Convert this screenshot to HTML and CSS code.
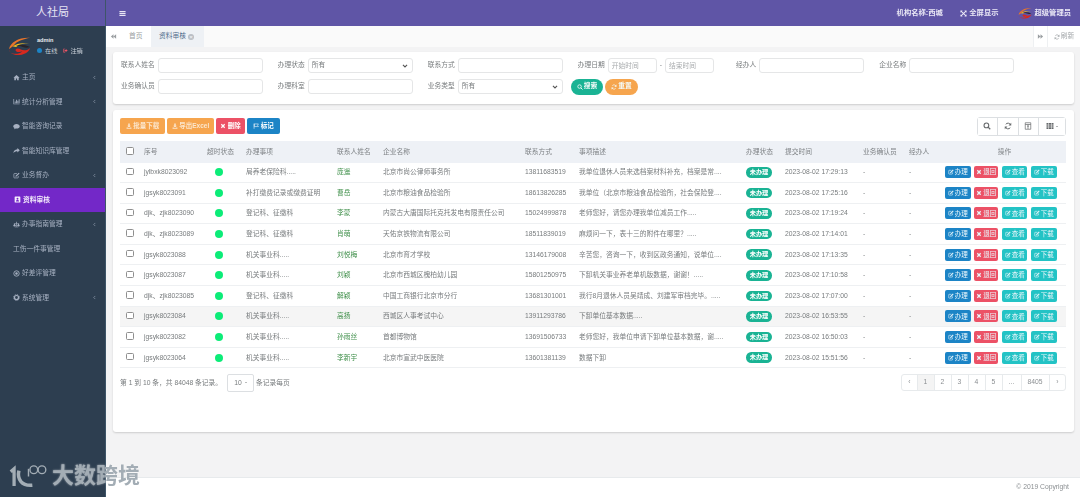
FILE: index.html
```html
<!DOCTYPE html>
<html lang="zh-CN">
<head>
<meta charset="utf-8">
<title>人社局</title>
<link rel="stylesheet" href="styles.css">
</head>
<body>
<svg class="defs" width="0" height="0" aria-hidden="true">
  <symbol id="i-home" viewBox="0 0 16 16"><path d="M8 2 1 8.500h2V14h3.700v-4h2.600v4H13V8.500h2z"/></symbol>
  <symbol id="i-chart" viewBox="0 0 16 16"><path d="M1 2h1.500v11H15v1.500H1zM4 8h2v4H4zM7 4h2v8H7zM10 6h2v6h-2zM13 3h2v9h-2z"/></symbol>
  <symbol id="i-comment" viewBox="0 0 16 16"><path d="M8 2c4 0 7.500 2.300 7.500 5.300S12 12.600 8 12.600c-.6 0-1.200 0-1.800-.1C5 13.600 3.500 14.200 2 14.300c.8-.8 1.400-1.800 1.500-2.900C1.700 10.500.5 9 .5 7.300.5 4.300 4 2 8 2z"/></symbol>
  <symbol id="i-share" viewBox="0 0 16 16"><path d="M10 2.500 15.500 7.500 10 12.500V9.800C6 9.800 3 10.800 1 14c0-5 3-8.500 9-9z"/></symbol>
  <symbol id="i-edit" viewBox="0 0 16 16"><path d="M12 9v3.500a1 1 0 0 1-1 1H3a1 1 0 0 1-1-1v-8a1 1 0 0 1 1-1h6" fill="none" stroke="currentColor" stroke-width="1.600"/><path d="M13 1.500 15 3.500 8 10.500 5.500 11 6 8.500z"/></symbol>
  <symbol id="i-book" viewBox="0 0 16 16"><path fill-rule="evenodd" d="M3 1h10a1.500 1.500 0 0 1 1.500 1.500v11A1.500 1.500 0 0 1 13 15H3a1.500 1.500 0 0 1-1.500-1.500v-11A1.500 1.500 0 0 1 3 1zm5 3a2.200 2.200 0 1 0 0 4.400A2.200 2.200 0 0 0 8 4zM4.500 12.500h7C11.500 10.500 10 9.300 8 9.300s-3.500 1.200-3.500 3.200z"/></symbol>
  <symbol id="i-scale" viewBox="0 0 16 16"><path d="M7.200 1.500h1.600v11H7.200zM4 13h8v1.500H4zM2 5h12v1.200H2z"/><path d="M.5 10a3 2.400 0 0 0 6 0L3.500 5.500zM9.500 10a3 2.400 0 0 0 6 0l-3-4.500z"/></symbol>
  <symbol id="i-dot" viewBox="0 0 16 16"><circle cx="8" cy="8" r="6.200" fill="none" stroke="currentColor" stroke-width="2"/><circle cx="8" cy="8" r="2.800"/></symbol>
  <symbol id="i-gear" viewBox="0 0 16 16"><circle cx="8" cy="8" r="4.600" fill="none" stroke="currentColor" stroke-width="2.800"/><circle cx="8" cy="8" r="6.700" fill="none" stroke="currentColor" stroke-width="2" stroke-dasharray="2.600 2.650"/></symbol>
  <symbol id="i-left" viewBox="0 0 16 16"><path d="M10.500 3 5.500 8l5 5" fill="none" stroke="currentColor" stroke-width="1.800"/></symbol>
  <symbol id="i-right" viewBox="0 0 16 16"><path d="M5.500 3l5 5-5 5" fill="none" stroke="currentColor" stroke-width="1.800"/></symbol>
  <symbol id="i-down" viewBox="0 0 16 16"><path d="M2.500 5 8 10.500 13.500 5" fill="none" stroke="currentColor" stroke-width="3"/></symbol>
  <symbol id="i-bars" viewBox="0 0 16 16"><path d="M1 2.500h14v2.600H1zM1 6.700h14v2.600H1zM1 10.900h14v2.600H1z"/></symbol>
  <symbol id="i-search" viewBox="0 0 16 16"><circle cx="6.800" cy="6.800" r="4.700" fill="none" stroke="currentColor" stroke-width="2.200"/><path d="M10.200 10.200 14.500 14.500" stroke="currentColor" stroke-width="2.600"/></symbol>
  <symbol id="i-refresh" viewBox="0 0 16 16"><path d="M13.300 6A5.600 5.600 0 0 0 3.500 4.600M2.700 10a5.600 5.600 0 0 0 9.800 1.400" fill="none" stroke="currentColor" stroke-width="2"/><path d="M14.500 1.500V7H9zM1.500 14.500V9H7z"/></symbol>
  <symbol id="i-download" viewBox="0 0 16 16"><path d="M6 1.500h4V7h3L8 12 3 7h3zM1.500 12h3l1.500 1.500h4L11.500 12h3v3h-13z"/></symbol>
  <symbol id="i-times" viewBox="0 0 16 16"><path d="M3.500 3.500l9 9M12.500 3.500l-9 9" stroke="currentColor" stroke-width="3.400" fill="none"/></symbol>
  <symbol id="i-flag" viewBox="0 0 16 16"><path d="M2 1.500h1.500V15H2z"/><path d="M3.500 2.500h11l-2.500 3.500 2.500 3.500h-11z" fill="none" stroke="currentColor" stroke-width="1.500"/></symbol>
  <symbol id="i-expand" viewBox="0 0 16 16"><path d="M1 1h5L4.300 2.700 8 6.400l3.700-3.700L10 1h5v5l-1.700-1.700L9.600 8l3.700 3.700L15 10v5h-5l1.700-1.700L8 9.600l-3.700 3.700L6 15H1v-5l1.700 1.700L6.400 8 2.700 4.300 1 6z"/></symbol>
  <symbol id="i-back" viewBox="0 0 16 16"><path d="M8 3v10L2 8zM14 3v10L8 8z"/></symbol>
  <symbol id="i-forward" viewBox="0 0 16 16"><path d="M2 3v10l6-5zM8 3v10l6-5z"/></symbol>
  <symbol id="i-toggle" viewBox="0 0 16 16"><path d="M2.500 1.500h11v13h-11zM2.500 5h11M8 5v9" fill="none" stroke="currentColor" stroke-width="1.400"/><path d="M6 7.500h4L8 10z"/></symbol>
  <symbol id="i-grid" viewBox="0 0 16 16"><path d="M1 2h4v3.400H1zM6 2h4v3.400H6zM11 2h4v3.400h-4zM1 6.300h4v3.400H1zM6 6.300h4v3.400H6zM11 6.300h4v3.400h-4zM1 10.600h4V14H1zM6 10.600h4V14H6zM11 10.600h4V14h-4z"/></symbol>
  <symbol id="i-logout" viewBox="0 0 16 16"><path d="M1 2h6v2.200H3v7.600h4V14H1z"/><path d="M9 3.500 15 8l-6 4.500V10H5V6h4z"/></symbol>
  <symbol id="logo" viewBox="0 0 24 20">
    <path d="M1 13C3 6 11 1 23 1.500 16 3 9 5 6 9.500 4.500 11 3 12 1 13z" fill="#e8742a"/>
    <path d="M5 10.500C9 7 15 6.500 22 7.500c-5 0-10 .5-13.500 3.500z" fill="#f0c020"/>
    <path d="M1 13.500c.5 3.500 4 6 9 6 6 0 12-3 13-7.500-1.500 1.500-3.500 2.500-6 2.500-3 0-4-2-7-2-1.500 0-2.500 1-2 2.500 1 2 5 1.500 7 .5-3 3-9 3.500-12 1.500C2.300 16 1.300 15 1 13.500z" fill="#d8281e"/>
    <path d="M8 9.500c5-1.500 10-.5 15 1.500-3 1-5 1-7.500 0-2.500-1-5-2-7.500-1.500z" fill="#2a2226"/>
  </symbol>
</svg>

<div class="app">
  <aside class="side">
    <div class="brand">人社局</div>
    <div class="profile">
      <svg class="avatar"><use href="#logo"/></svg>
      <div class="who">
        <div class="who-name">admin</div>
        <div class="who-state">
          <span class="online-dot"></span><span>在线</span>
          <svg class="ico logout"><use href="#i-logout"/></svg><span>注销</span>
        </div>
      </div>
    </div>
    <nav class="nav">
      <a class="nav-item"><svg class="ico"><use href="#i-home"/></svg><span>主页</span><svg class="ico chev"><use href="#i-left"/></svg></a>
      <a class="nav-item"><svg class="ico"><use href="#i-chart"/></svg><span>统计分析管理</span><svg class="ico chev"><use href="#i-left"/></svg></a>
      <a class="nav-item"><svg class="ico"><use href="#i-comment"/></svg><span>智能咨询记录</span></a>
      <a class="nav-item"><svg class="ico"><use href="#i-share"/></svg><span>智能知识库管理</span></a>
      <a class="nav-item"><svg class="ico"><use href="#i-edit"/></svg><span>业务督办</span><svg class="ico chev"><use href="#i-left"/></svg></a>
      <a class="nav-item active"><svg class="ico"><use href="#i-book"/></svg><span>资料审核</span></a>
      <a class="nav-item"><svg class="ico"><use href="#i-scale"/></svg><span>办事指南管理</span><svg class="ico chev"><use href="#i-left"/></svg></a>
      <a class="nav-item"><span>工伤一件事管理</span></a>
      <a class="nav-item"><svg class="ico"><use href="#i-dot"/></svg><span>好差评管理</span></a>
      <a class="nav-item"><svg class="ico"><use href="#i-gear"/></svg><span>系统管理</span><svg class="ico chev"><use href="#i-left"/></svg></a>
    </nav>
  </aside>

  <main class="main">
    <header class="top">
      <svg class="ico top-bars"><use href="#i-bars"/></svg>
      <div class="top-right">
        <span class="top-org">机构名称:西城</span>
        <span class="top-full"><svg class="ico"><use href="#i-expand"/></svg>全屏显示</span>
        <span class="top-user"><svg class="top-logo"><use href="#logo"/></svg>超级管理员</span>
      </div>
    </header>

    <div class="tabs">
      <button class="tab-arrow"><svg class="ico"><use href="#i-back"/></svg></button>
      <span class="tab">首页</span>
      <span class="tab tab-on">资料审核<i class="tab-close">×</i></span>
      <span class="tabs-fill"></span>
      <button class="tab-arrow tab-arrow-r"><svg class="ico"><use href="#i-forward"/></svg></button>
      <button class="tab-refresh"><svg class="ico"><use href="#i-refresh"/></svg>刷新</button>
    </div>

    <div class="content">
      <section class="card filter">
        <div class="frow">
          <label class="field"><span>联系人姓名</span><input class="inp"></label>
          <label class="field"><span>办理状态</span><span class="sel"><select class="inp"><option>所有</option></select><svg class="ico sel-arrow"><use href="#i-down"/></svg></span></label>
          <label class="field"><span>联系方式</span><input class="inp"></label>
          <div class="field"><span>办理日期</span><input class="inp inp-date" placeholder="开始时间"><span class="dash">-</span><input class="inp inp-date" placeholder="结束时间"></div>
          <label class="field field-wide"><span>经办人</span><input class="inp"></label>
          <label class="field"><span>企业名称</span><input class="inp"></label>
        </div>
        <div class="frow">
          <label class="field"><span>业务确认员</span><input class="inp"></label>
          <label class="field"><span>办理科室</span><input class="inp"></label>
          <label class="field"><span>业务类型</span><span class="sel"><select class="inp"><option>所有</option></select><svg class="ico sel-arrow"><use href="#i-down"/></svg></span></label>
          <button class="pill pill-green"><svg class="ico"><use href="#i-search"/></svg>搜索</button>
          <button class="pill pill-orange"><svg class="ico"><use href="#i-refresh"/></svg>重置</button>
        </div>
      </section>

      <section class="card list">
        <div class="toolbar">
          <button class="tbtn orange w45"><svg class="ico"><use href="#i-download"/></svg>批量下载</button>
          <button class="tbtn orange w47"><svg class="ico"><use href="#i-download"/></svg>导出Excel</button>
          <button class="tbtn red w29"><svg class="ico"><use href="#i-times"/></svg>删除</button>
          <button class="tbtn blue w33"><svg class="ico"><use href="#i-flag"/></svg>标记</button>
          <div class="tools">
            <button class="tool"><svg class="ico"><use href="#i-search"/></svg></button>
            <button class="tool"><svg class="ico"><use href="#i-refresh"/></svg></button>
            <button class="tool"><svg class="ico"><use href="#i-toggle"/></svg></button>
            <button class="tool tool-last"><svg class="ico"><use href="#i-grid"/></svg><i class="caret"></i></button>
          </div>
        </div>

        <table class="grid">
          <colgroup>
            <col class="c-cb"><col class="c-no"><col class="c-late"><col class="c-item"><col class="c-name"><col class="c-co"><col class="c-tel"><col class="c-desc"><col class="c-st"><col class="c-time"><col class="c-conf"><col class="c-op"><col class="c-act">
          </colgroup>
          <thead>
            <tr><th class="cb"><input type="checkbox"></th><th>序号</th><th>超时状态</th><th>办理事项</th><th>联系人姓名</th><th>企业名称</th><th>联系方式</th><th>事项描述</th><th>办理状态</th><th>提交时间</th><th>业务确认员</th><th>经办人</th><th class="center">操作</th></tr>
          </thead>
          <tbody id="rows">
            <tr><td class="cb"><input type="checkbox"></td><td>jylbxk8023092</td><td><i class="dot"></i></td><td>局养老保险科.....</td><td class="nm">庞遥</td><td>北京市尚公律师事务所</td><td>13811683519</td><td>我单位退休人员来选档案材料补充，档案是常....</td><td><span class="st">未办理</span></td><td>2023-08-02 17:29:13</td><td>-</td><td>-</td><td class="acts"><span class="act blue"><svg class="ico"><use href="#i-edit"/></svg>办理</span><span class="act red"><svg class="ico"><use href="#i-times"/></svg>退回</span><span class="act teal"><svg class="ico"><use href="#i-edit"/></svg>查看</span><span class="act teal"><svg class="ico"><use href="#i-edit"/></svg>下载</span></td></tr>
            <tr><td class="cb"><input type="checkbox"></td><td>jgsyk8023091</td><td><i class="dot"></i></td><td>补打缴费记录或缴费证明</td><td class="nm">曹岳</td><td>北京市粮油食品检验所</td><td>18613826285</td><td>我单位（北京市粮油食品检验所，社会保险登....</td><td><span class="st">未办理</span></td><td>2023-08-02 17:25:16</td><td>-</td><td>-</td><td class="acts"><span class="act blue"><svg class="ico"><use href="#i-edit"/></svg>办理</span><span class="act red"><svg class="ico"><use href="#i-times"/></svg>退回</span><span class="act teal"><svg class="ico"><use href="#i-edit"/></svg>查看</span><span class="act teal"><svg class="ico"><use href="#i-edit"/></svg>下载</span></td></tr>
            <tr><td class="cb"><input type="checkbox"></td><td>djk、zjk8023090</td><td><i class="dot"></i></td><td>登记科、征缴科</td><td class="nm">李蒙</td><td>内蒙古大唐国际托克托发电有限责任公司</td><td>15024999878</td><td>老师您好，请您办理我单位减员工作.....</td><td><span class="st">未办理</span></td><td>2023-08-02 17:19:24</td><td>-</td><td>-</td><td class="acts"><span class="act blue"><svg class="ico"><use href="#i-edit"/></svg>办理</span><span class="act red"><svg class="ico"><use href="#i-times"/></svg>退回</span><span class="act teal"><svg class="ico"><use href="#i-edit"/></svg>查看</span><span class="act teal"><svg class="ico"><use href="#i-edit"/></svg>下载</span></td></tr>
            <tr><td class="cb"><input type="checkbox"></td><td>djk、zjk8023089</td><td><i class="dot"></i></td><td>登记科、征缴科</td><td class="nm">肖萌</td><td>天佑京铁物流有限公司</td><td>18511839019</td><td>麻烦问一下，表十三的附件在哪里？.....</td><td><span class="st">未办理</span></td><td>2023-08-02 17:14:01</td><td>-</td><td>-</td><td class="acts"><span class="act blue"><svg class="ico"><use href="#i-edit"/></svg>办理</span><span class="act red"><svg class="ico"><use href="#i-times"/></svg>退回</span><span class="act teal"><svg class="ico"><use href="#i-edit"/></svg>查看</span><span class="act teal"><svg class="ico"><use href="#i-edit"/></svg>下载</span></td></tr>
            <tr><td class="cb"><input type="checkbox"></td><td>jgsyk8023088</td><td><i class="dot"></i></td><td>机关事业科.....</td><td class="nm">刘悦梅</td><td>北京市育才学校</td><td>13146179008</td><td>辛苦您，咨询一下，收到区政务通知，说单位....</td><td><span class="st">未办理</span></td><td>2023-08-02 17:13:35</td><td>-</td><td>-</td><td class="acts"><span class="act blue"><svg class="ico"><use href="#i-edit"/></svg>办理</span><span class="act red"><svg class="ico"><use href="#i-times"/></svg>退回</span><span class="act teal"><svg class="ico"><use href="#i-edit"/></svg>查看</span><span class="act teal"><svg class="ico"><use href="#i-edit"/></svg>下载</span></td></tr>
            <tr><td class="cb"><input type="checkbox"></td><td>jgsyk8023087</td><td><i class="dot"></i></td><td>机关事业科.....</td><td class="nm">刘颖</td><td>北京市西城区槐柏幼儿园</td><td>15801250975</td><td>下卸机关事业养老单机版数据，谢谢！.....</td><td><span class="st">未办理</span></td><td>2023-08-02 17:10:58</td><td>-</td><td>-</td><td class="acts"><span class="act blue"><svg class="ico"><use href="#i-edit"/></svg>办理</span><span class="act red"><svg class="ico"><use href="#i-times"/></svg>退回</span><span class="act teal"><svg class="ico"><use href="#i-edit"/></svg>查看</span><span class="act teal"><svg class="ico"><use href="#i-edit"/></svg>下载</span></td></tr>
            <tr><td class="cb"><input type="checkbox"></td><td>djk、zjk8023085</td><td><i class="dot"></i></td><td>登记科、征缴科</td><td class="nm">解颖</td><td>中国工商银行北京市分行</td><td>13681301001</td><td>我行8月退休人员吴靖成、刘建军审档完毕。.....</td><td><span class="st">未办理</span></td><td>2023-08-02 17:07:00</td><td>-</td><td>-</td><td class="acts"><span class="act blue"><svg class="ico"><use href="#i-edit"/></svg>办理</span><span class="act red"><svg class="ico"><use href="#i-times"/></svg>退回</span><span class="act teal"><svg class="ico"><use href="#i-edit"/></svg>查看</span><span class="act teal"><svg class="ico"><use href="#i-edit"/></svg>下载</span></td></tr>
            <tr class="hover"><td class="cb"><input type="checkbox"></td><td>jgsyk8023084</td><td><i class="dot"></i></td><td>机关事业科.....</td><td class="nm">高扬</td><td>西城区人事考试中心</td><td>13911293786</td><td>下卸单位基本数据.....</td><td><span class="st">未办理</span></td><td>2023-08-02 16:53:55</td><td>-</td><td>-</td><td class="acts"><span class="act blue"><svg class="ico"><use href="#i-edit"/></svg>办理</span><span class="act red"><svg class="ico"><use href="#i-times"/></svg>退回</span><span class="act teal"><svg class="ico"><use href="#i-edit"/></svg>查看</span><span class="act teal"><svg class="ico"><use href="#i-edit"/></svg>下载</span></td></tr>
            <tr><td class="cb"><input type="checkbox"></td><td>jgsyk8023082</td><td><i class="dot"></i></td><td>机关事业科.....</td><td class="nm">孙雨丝</td><td>首都博物馆</td><td>13691506733</td><td>老师您好，我单位申请下卸单位基本数据，谢.....</td><td><span class="st">未办理</span></td><td>2023-08-02 16:50:03</td><td>-</td><td>-</td><td class="acts"><span class="act blue"><svg class="ico"><use href="#i-edit"/></svg>办理</span><span class="act red"><svg class="ico"><use href="#i-times"/></svg>退回</span><span class="act teal"><svg class="ico"><use href="#i-edit"/></svg>查看</span><span class="act teal"><svg class="ico"><use href="#i-edit"/></svg>下载</span></td></tr>
            <tr><td class="cb"><input type="checkbox"></td><td>jgsyk8023064</td><td><i class="dot"></i></td><td>机关事业科.....</td><td class="nm">李新宇</td><td>北京市宣武中医医院</td><td>13601381139</td><td>数据下卸</td><td><span class="st">未办理</span></td><td>2023-08-02 15:51:56</td><td>-</td><td>-</td><td class="acts"><span class="act blue"><svg class="ico"><use href="#i-edit"/></svg>办理</span><span class="act red"><svg class="ico"><use href="#i-times"/></svg>退回</span><span class="act teal"><svg class="ico"><use href="#i-edit"/></svg>查看</span><span class="act teal"><svg class="ico"><use href="#i-edit"/></svg>下载</span></td></tr>
          </tbody>
        </table>

        <div class="pager-row">
          <span>第 1 到 10 条，共 84048 条记录。</span>
          <span class="size">10<i class="caret"></i></span>
          <span>条记录每页</span>
          <div class="pager">
            <a class="pg pg-arrow">‹</a><a class="pg pg-on">1</a><a class="pg">2</a><a class="pg">3</a><a class="pg">4</a><a class="pg">5</a><a class="pg pg-more">...</a><a class="pg pg-last">8405</a><a class="pg pg-arrow">›</a>
          </div>
        </div>
      </section>
    </div>

    <footer class="foot">© 2019 Copyright</footer>
  </main>

  <div class="mark">
    <svg class="mark-logo" viewBox="0 0 40 26" fill="none" stroke="currentColor">
      <path d="M1.500 8 5 5V23" stroke-width="3.400"/>
      <path d="M10 7C8 16 13 23 24 22" stroke-width="3.600"/>
      <path d="M20 5V13" stroke-width="1.500"/>
      <circle cx="25.500" cy="6" r="4" stroke-width="1.400"/>
      <circle cx="34" cy="6" r="4" stroke-width="1.400"/>
    </svg>
    <span>大数跨境</span>
  </div>
</div>
</body>
</html>
```
FILE: styles.css
```css
* { box-sizing: border-box; }
html, body { margin: 0; height: 100%; overflow: hidden; }
body {
  font: 6.75px/1.2 "Liberation Sans", "Noto Sans CJK SC", sans-serif;
  color: #777b7d;
  background: #f3f3f4;
}
button { font: inherit; border: 0; padding: 0; cursor: pointer; }
.defs { position: absolute; }
.ico { width: 7px; height: 7px; fill: currentColor; flex: none; }

.app { display: flex; height: 497px; position: relative; filter: blur(.3px); }

/* sidebar */
.side { width: 106px; flex: none; background: #2d3e50; color: #a7b1c2; border-right: 1px solid #3e5568; }
.brand { height: 26px; background: #5f55a6; color: #e6e4f2; font-size: 11px; display: flex; align-items: center; justify-content: center; }
.profile { height: 39px; display: flex; padding: 10px 0 0 8px; gap: 6px; }
.avatar { width: 23px; height: 20px; }
.who { padding-top: 1px; }
.who-name { color: #e8ebef; font-weight: 700; font-size: 5.600px; line-height: 7px; }
.who-state { display: flex; align-items: center; gap: 2px; margin-top: 3px; color: #c9d0d8; font-size: 6.200px; }
.online-dot { width: 5px; height: 5px; border-radius: 50%; background: #1c84c6; margin-right: 1px; }
.logout { width: 5px; height: 5px; color: #ed5565; margin-left: 4px; }
.nav { display: flex; flex-direction: column; }
.nav-item { height: 24.500px; display: flex; align-items: center; gap: 2px; padding: 0 8px 0 13px; position: relative; }
.nav-item span { flex: 1; }
.chev { width: 5px; height: 5px; }
.active { background: #7328c8; color: #f3ecfb; padding-left: 14px; font-weight: 700; }
.active .ico { width: 7px; height: 7px; }

/* main */
.main { flex: 1; min-width: 0; display: flex; flex-direction: column; }
.top { height: 26px; background: #5f55a6; color: #fff; display: flex; align-items: center; padding: 0 9px 0 13px; justify-content: space-between; }
.top-bars { width: 7px; height: 7px; color: #e8e6f4; }
.top-right { display: flex; align-items: center; font-weight: 700; color: #ebe9f6; font-size: 7.300px; }
.top-org { margin-right: 17px; }
.top-full { display: flex; align-items: center; gap: 2.500px; margin-right: 19px; }
.top-user { display: flex; align-items: center; gap: 3px; }
.top-logo { width: 14px; height: 12px; }

.tabs { height: 21px; display: flex; background: #fafafa; color: #9a9ea1; }
.tab-arrow { width: 15px; background: #fff; color: #9a9ea1; display: flex; align-items: center; justify-content: center; }
.tab-arrow-r { border-left: 1px solid #eef0f2; border-right: 1px solid #eef0f2; }
.tab { padding: 0 8px; display: flex; align-items: center; background: #fff; width: 30px; white-space: nowrap; }
.tab-on { width: 53px; background: #eef1f5; color: #4e6b8c; padding-left: 8px; gap: 2px; }
.tab-close { width: 6px; height: 6px; border-radius: 50%; background: #b9bec4; color: #eef1f5; font: 700 6px/6px "Liberation Sans", sans-serif; text-align: center; }
.tabs-fill { flex: 1; }
.tab-refresh { width: 32px; background: #fff; color: #a3a7aa; display: flex; align-items: center; justify-content: center; gap: 1px; }
.tab-refresh .ico { width: 6px; height: 6px; }

.content { flex: 1; min-height: 0; padding: 5px 6px 0 7px; display: flex; flex-direction: column; gap: 6px; }
.card { background: #fff; border-radius: 3px; box-shadow: 0 1px 2px rgba(0, 0, 0, .16); }

/* filter */
.filter { height: 52px; padding: 6px 8px 0; display: flex; flex-direction: column; gap: 6px; }
.frow { display: flex; align-items: center; height: 15px; gap: 15px; }
.field { display: flex; align-items: center; gap: 3px; white-space: nowrap; }
.field-wide { margin-left: 7px; }
.inp { width: 105px; height: 15px; border: 1px solid #e5e6e7; border-radius: 3px; background: #fff; font: inherit; color: #777b7d; padding: 0 3px; outline: 0; appearance: none; display: block; }
.inp::placeholder { color: #a8abad; }
.inp-date { width: 49px; }
.dash { width: 2.250px; text-align: center; }
.sel { position: relative; display: block; }
.sel-arrow { position: absolute; right: 5px; top: 5px; width: 6px; height: 6px; color: #555; }
.pill { height: 16px; width: 32.500px; border-radius: 8px; color: #f4fbf9; font-weight: 700; display: flex; align-items: center; justify-content: center; gap: 1px; }
.pill .ico { width: 6px; height: 6px; }
.pill-green { background: #1ab394; margin-left: -7px; }
.pill-orange { background: #f6a54e; margin-left: -13px; }

/* list */
.list { height: 322px; padding: 7px 8px 0 7px; }
.toolbar { height: 18.500px; display: flex; align-items: center; gap: 2px; margin-bottom: 5.500px; }
.tbtn { height: 16px; border-radius: 2px; color: #fff; font-weight: 700; display: flex; align-items: center; justify-content: center; gap: 1.500px; font-size: 6.500px; }
.tbtn .ico { width: 6px; height: 6px; }
.orange { background: #f6a54e; color: #fbe6cd; }
.red { background: #ec5166; }
.blue { background: #1c84c6; }
.teal { background: #23c3c5; }
.w45 { width: 45px; }
.w47 { width: 47px; }
.w29 { width: 29px; }
.w33 { width: 33px; }
.tools { margin-left: auto; display: flex; height: 18.500px; border: 1px solid #dcdfe2; border-radius: 3px; }
.tool { width: 20.500px; background: #fff; color: #676a6c; border-right: 1px solid #dcdfe2; display: flex; align-items: center; justify-content: center; gap: 2px; }
.tool-last { width: 26px; border-right: 0; }
.tool .ico { width: 8px; height: 8px; }
.caret { width: 0; height: 0; border: 1.500px solid transparent; border-top-color: currentColor; border-bottom: 0; display: inline-block; }

.grid { width: 946px; table-layout: fixed; border-collapse: separate; border-spacing: 0; }
.c-cb { width: 20px; }
.c-no { width: 63px; }
.c-late { width: 39px; }
.c-item { width: 91px; }
.c-name { width: 46px; }
.c-co { width: 142px; }
.c-tel { width: 54px; }
.c-desc { width: 167px; }
.c-st { width: 39px; }
.c-time { width: 78px; }
.c-conf { width: 46px; }
.c-op { width: 34px; }
.c-act { width: 127px; }
.grid th { height: 21.500px; background: #eef1f6; font-weight: 400; text-align: left; padding: 0 0 0 4px; white-space: nowrap; color: #7e8285; }
.grid td { height: 20.600px; padding: 0 0 0 4px; border-bottom: 1px solid #eef0f2; white-space: nowrap; overflow: hidden; }
.grid .center { text-align: center; }
.grid .cb { padding-left: 6px; }
.cb input { appearance: none; display: block; width: 7.500px; height: 7.500px; margin: 0 0 2px; border: 1px solid #8f8f8f; border-radius: 1.500px; background: #fff; }
.hover td { background: #f5f5f5; }
.nm { color: #3f8f4a; }
.dot { display: block; width: 8px; height: 8px; margin-left: 8px; border-radius: 50%; background: #0cec78; }
.st { display: block; width: 26px; height: 10.500px; line-height: 10.500px; border-radius: 5.250px; background: #1ab394; color: #fff; font-weight: 700; text-align: center; font-size: 6.200px; }
.acts { font-size: 0; }
.grid .acts { padding-left: 6px; }
.act { display: inline-flex; align-items: center; justify-content: center; gap: 1px; width: 25.500px; height: 12px; border-radius: 2px; color: #e9f6fb; font-size: 6.500px; margin-right: 3.700px; vertical-align: middle; }
.act:last-child { margin-right: 0; }
.act .ico { width: 6px; height: 6px; }
.act.red { width: 24px; }

.pager-row { display: flex; align-items: center; margin-top: 5.500px; height: 18px; gap: 5px; }
.size { width: 27px; height: 18px; border: 1px solid #dcdfe2; border-radius: 2px; display: flex; align-items: center; justify-content: center; gap: 3px; margin-right: -3px; }
.pager { margin-left: auto; display: flex; height: 17.500px; border: 1px solid #e7eaec; border-radius: 3px; margin-top: -1px; }
.pg { width: 17px; display: flex; align-items: center; justify-content: center; border-right: 1px solid #e7eaec; color: #8b8f92; }
.pg:last-child { border-right: 0; }
.pg-arrow { width: 15.500px; }
.pg-on { background: #f4f4f4; }
.pg-more { width: 19px; }
.pg-last { width: 28px; }

.foot { height: 20px; background: #fff; border-top: 1px solid #e7eaec; text-align: right; padding: 5px 11px 0 0; color: #8b8f92; }

/* watermark */
.mark { position: absolute; left: 9px; top: 463px; display: flex; align-items: center; gap: 4px; color: #a3adb5; font-size: 22px; line-height: 26px; font-weight: 700; text-shadow: 0 0 2px rgba(255, 255, 255, .6); }
.mark-logo { width: 39px; height: 25px; }
```
